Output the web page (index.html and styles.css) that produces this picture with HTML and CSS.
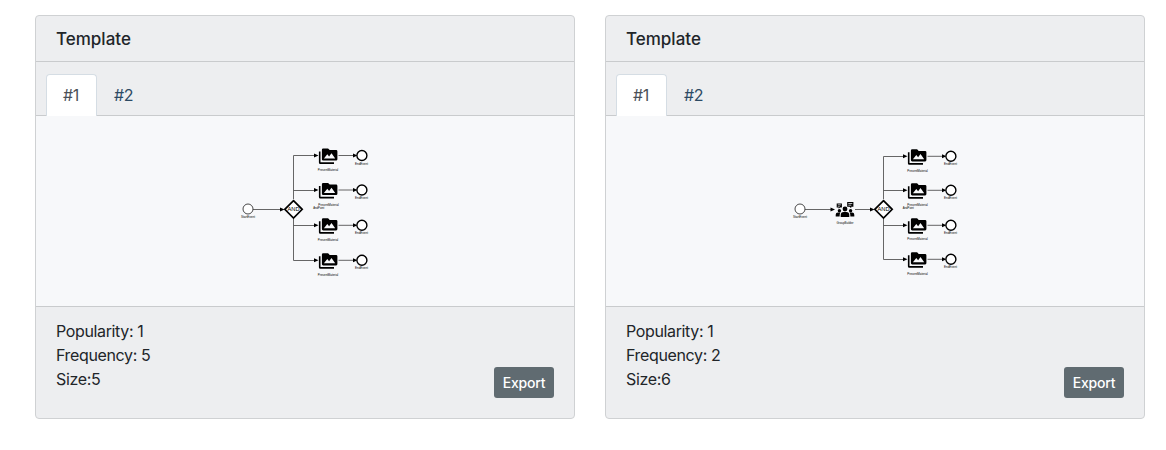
FILE: index.html
```html
<!DOCTYPE html>
<html lang="en">
<head>
<meta charset="utf-8">
<title>Templates</title>
<link rel="stylesheet" href="styles.css">
</head>
<body>
<main class="cards">
  <section class="card">
    <h5 class="card-title">Template</h5>
    <nav class="tabs"><a class="tab active">#1</a><a class="tab">#2</a></nav>
    <svg class="diagram" viewBox="36 116 538 190">
      <defs>
        <g id="arrow"><path d="M0.500 0l-4.500-2v4z"/></g>
        <g id="start">
          <circle class="thin" r="5"/>
          <text class="label" y="9" textLength="14" lengthAdjust="spacingAndGlyphs">StartEvent</text>
        </g>
        <g id="gateway">
          <path class="thick" d="M0-8.7L8.7 0 0 8.7-8.7 0z"/>
          <text class="gate" y="1.700" textLength="12" lengthAdjust="spacingAndGlyphs">AND</text>
        </g>
        <!-- Present-material task followed by its end event; origin is the incoming arrow tip -->
        <g id="branch">
          <use href="#arrow"/>
          <path d="M.9-4h1.600V6.800h13.500v1.700H2.300Q.9 8.500 .9 7z"/>
          <path fill-rule="evenodd" d="M5.200-7h4.900l1.600 1.600h6.400q1.300 0 1.300 1.300v7.900q0 1.300-1.300 1.300H5.200q-1.300 0-1.300-1.300v-9.500q0-1.300 1.300-1.300zM5.900 3h11.300l-3.700-5.200-2.400 3.100-1.800-2.100z"/>
          <path class="line" d="M20.500 0H36"/>
          <use href="#arrow" x="39"/>
          <circle class="end" cx="43.900" r="5"/>
          <text class="label" x="43.500" y="9.200" textLength="13" lengthAdjust="spacingAndGlyphs">EndEvent</text>
        </g>
        <g id="material"><text class="label" textLength="20.500" lengthAdjust="spacingAndGlyphs">PresentMaterial</text></g>
        <g id="join"><text class="label" textLength="11" lengthAdjust="spacingAndGlyphs">AndPoint</text></g>
      </defs>
      <path class="line" d="M253 209.500H281M293.500 199V155.500H315M293.500 190.500H315M293.500 219V260.500H315M293.500 225.500H315"/>
      <use href="#start" x="248" y="209"/>
      <use href="#arrow" x="284" y="209.500"/>
      <use href="#gateway" x="293.500" y="209.300"/>
      <use href="#branch" x="318" y="155.500"/>
      <use href="#branch" x="318" y="190"/>
      <use href="#branch" x="318" y="225.300"/>
      <use href="#branch" x="318" y="260.300"/>
      <use href="#material" x="328" y="171"/>
      <use href="#material" x="328.500" y="206"/>
      <use href="#join" x="318.800" y="209"/>
      <use href="#material" x="328" y="241"/>
      <use href="#material" x="328" y="276"/>
    </svg>
    <div class="card-footer">
      <div>Popularity: 1<br>Frequency: 5<br>Size:5</div>
      <button class="export">Export</button>
    </div>
  </section>
  <section class="card">
    <h5 class="card-title">Template</h5>
    <nav class="tabs"><a class="tab active">#1</a><a class="tab">#2</a></nav>
    <svg class="diagram" viewBox="606 116 538 190">
      <path class="line" d="M805 209.500H832M855 209.500H871M883.500 199V156.500H905M883.500 190.500H905M883.500 219V259.500H905M883.500 225.500H905"/>
      <use href="#start" x="800" y="209"/>
      <use href="#arrow" x="834.500" y="209.500"/>
      <use href="#arrow" x="874" y="209.500"/>
      <!-- Group builder: three people with speech bubbles -->
      <g>
        <circle cx="845" cy="209" r="2.400"/>
        <circle cx="839.400" cy="210.700" r="1.700"/>
        <circle cx="850.600" cy="210.700" r="1.700"/>
        <path d="M840.700 217v-2q0-3 3-3h2.600q3 0 3 3v2zM835.700 216.500v-1.700q0-2.200 2.200-2.200h2.500q-.800 1-.800 3.900zM854.300 216.500v-1.700q0-2.200-2.200-2.200h-2.500q.800 1 .800 3.900z"/>
        <path fill-rule="evenodd" d="M836.700 203.500h5.200v4h-2l-1.200 1.300v-1.300h-2zM837.800 204.500v.7h3v-.7zM837.800 206v.6h2v-.6zM847.200 202h6.200v4.700h-2.200v1.500l-1.600-1.500h-2.400zM848.300 203.200v.7h4v-.7zM848.300 204.800v.7h3v-.7z"/>
        <text class="label" x="845" y="224" textLength="17" lengthAdjust="spacingAndGlyphs">GroupBuilder</text>
      </g>
      <use href="#gateway" x="883.500" y="209.300"/>
      <use href="#branch" x="907" y="156.300"/>
      <use href="#branch" x="907" y="190.300"/>
      <use href="#branch" x="907" y="225.300"/>
      <use href="#branch" x="907" y="259.300"/>
      <use href="#material" x="917.500" y="171.800"/>
      <use href="#material" x="917.500" y="206"/>
      <use href="#join" x="908.300" y="209"/>
      <use href="#material" x="917.500" y="240"/>
      <use href="#material" x="917.500" y="275"/>
    </svg>
    <div class="card-footer">
      <div>Popularity: 1<br>Frequency: 2<br>Size:6</div>
      <button class="export">Export</button>
    </div>
  </section>
</main>
</body>
</html>
```
FILE: styles.css
```css
* { box-sizing: border-box; }
body { margin: 0; background: #fff; color: #212529; font: 16px/24px Inter, "Liberation Sans", sans-serif; letter-spacing: -0.36px; }
.cards { display: flex; gap: 30px; padding: 15px 0 0 35px; }
.card { width: 540px; height: 404px; background: #edeef0; border: 1px solid #cfd1d3; border-radius: 4px; overflow: hidden; }
.card-title { margin: 0; height: 46px; padding: 11px 20px; font-size: 17px; font-weight: 500; letter-spacing: 0; border-bottom: 1px solid #c9cbcd; }
.tabs { display: flex; height: 54px; padding: 12px 10px 0; border-bottom: 1px solid #c9cbcd; }
.tab { height: 42px; width: 51px; padding: 8px 0 0; text-align: center; color: #2c4a63; border: 1px solid transparent; border-bottom: 0; border-radius: 4px 4px 0 0; }
.tab + .tab { margin-left: 1px; }
.tab.active { padding-right: 1px; background: #fff; color: #495057; border-color: #d5dde4; }
.diagram { display: block; width: 538px; height: 190px; background: #f7f8fa; }
.card-footer { display: flex; justify-content: space-between; height: 112px; padding: 12px 20px; border-top: 1px solid #c9cbcd; }
.export { align-self: flex-end; width: 60px; height: 31px; margin-bottom: 8px; padding: 0; border: 0; border-radius: 3px; background: #606b71; color: #fff; font: 500 14px/31px Inter, "Liberation Sans", sans-serif; letter-spacing: -0.2px; }
.line { fill: none; stroke: #555; stroke-width: 0.9; }
.thin { fill: #fff; stroke: #333; stroke-width: 0.9; }
.end { fill: #fff; stroke: #000; stroke-width: 1.4; }
.thick { fill: #fff; stroke: #000; stroke-width: 1.7; }
.label, .gate { font-family: "Liberation Sans", sans-serif; text-anchor: middle; letter-spacing: 0; }
.label { font-size: 3px; }
.gate { font-size: 5px; }
```
